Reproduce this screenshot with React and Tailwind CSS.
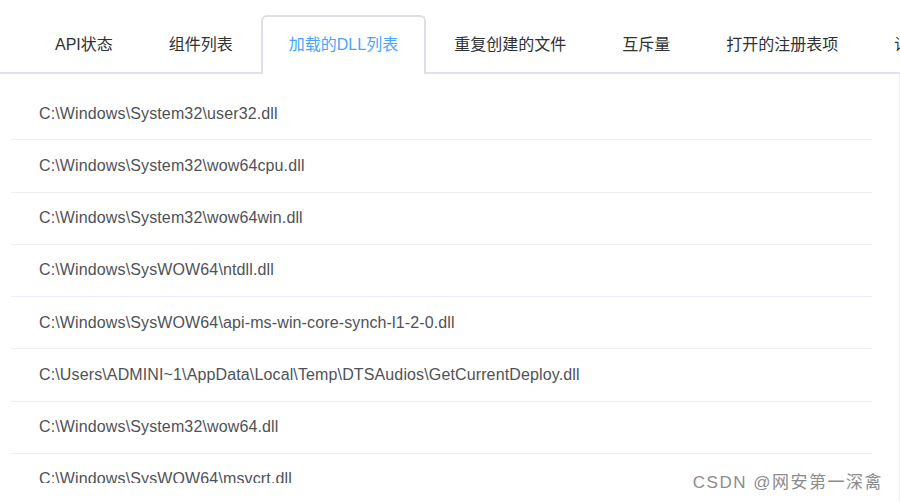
import React from 'react';

const tabs = ['API状态', '组件列表', '加载的DLL列表', '重复创建的文件', '互斥量', '打开的注册表项', '读取的文件'];

const dlls = [
  'C:\\Windows\\System32\\user32.dll',
  'C:\\Windows\\System32\\wow64cpu.dll',
  'C:\\Windows\\System32\\wow64win.dll',
  'C:\\Windows\\SysWOW64\\ntdll.dll',
  'C:\\Windows\\SysWOW64\\api-ms-win-core-synch-l1-2-0.dll',
  'C:\\Users\\ADMINI~1\\AppData\\Local\\Temp\\DTSAudios\\GetCurrentDeploy.dll',
  'C:\\Windows\\System32\\wow64.dll',
  'C:\\Windows\\SysWOW64\\msvcrt.dll',
];

const App = () => {
  return (
    <div className="relative w-[900px] h-[503px] overflow-hidden bg-white font-['Liberation_Sans','Noto_Sans_CJK_SC',sans-serif]">
      {/* tab bar */}
      <div className="flex items-end h-[74px] border-b-2 border-[#dfe3ea] pl-[27px] whitespace-nowrap">
        {tabs.map((t, i) => (
          <div
            key={t}
            className={
              i === 2
                ? 'flex items-center h-[59px] -mb-[2px] px-[26px] pb-[1px] border-2 border-b-0 border-[#dcdfe6] rounded-t-[6px] bg-white text-[16px] text-[#46a6ff]'
                : 'flex items-center h-[59px] -mb-[2px] px-7 pt-[2px] pb-[1px] text-[16px] text-[#303133] shrink-0'
            }
          >
            {t}
          </div>
        ))}
      </div>

      {/* dll list */}
      <div className="h-[427px] border-r border-[#ececec] pt-[14px]">
        <div className="ml-[11px] w-[861px] h-[395px] overflow-hidden">
          {dlls.map((d) => (
            <div
              key={d}
              className="flex items-center h-[52.25px] pl-7 border-b border-[#ebeef5] text-[16px] tracking-[0.13px] text-[#4f5257] whitespace-nowrap"
            >
              {d}
            </div>
          ))}
        </div>
      </div>

      {/* watermark */}
      <div className="absolute right-[17px] bottom-[8px] text-[17px] tracking-[1.5px] text-[#8c8c8c] [text-shadow:0_0_2px_#fff]">
        CSDN @网安第一深禽
      </div>
    </div>
  );
};

export default App;
